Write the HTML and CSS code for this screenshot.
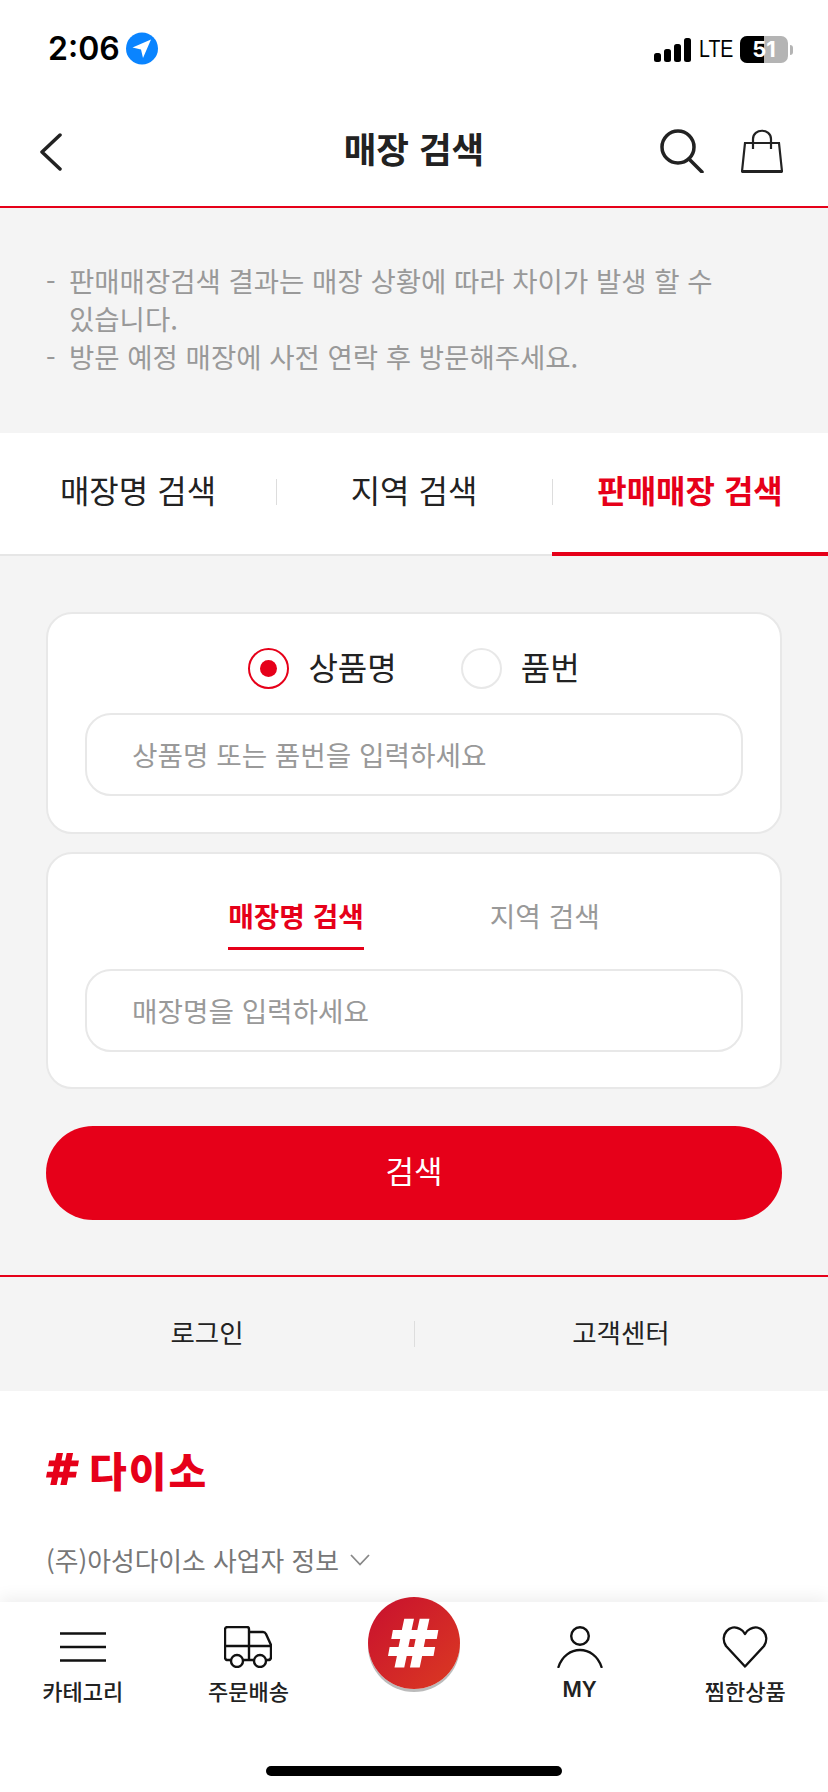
FILE: index.html
```html
<!DOCTYPE html>
<html lang="ko">
<head>
    <meta charset="UTF-8">
    <meta name="viewport" content="width=device-width, initial-scale=1.0">
    <title>매장 검색</title>
    <link rel="stylesheet" href="styles.css">
</head>
<body>
    <div class="page">
        <div class="status-bar">
            <div class="status-left">
                <span class="clock">2:06</span>
                <svg class="loc-icon" width="32" height="33" viewBox="0 0 32 33"><circle cx="16" cy="16.5" r="16" fill="#0a84ff"/><path d="M25 7.500 L6.500 15.500 L15 17.500 L17 26 Z" fill="#fff"/></svg>
            </div>
            <div class="status-right">
                <svg width="37" height="24" viewBox="0 0 37 24"><rect x="0" y="15" width="7" height="9" rx="2.500"/><rect x="10" y="11" width="7" height="13" rx="2.500"/><rect x="20" y="6" width="7" height="18" rx="2.500"/><rect x="30" y="0" width="7" height="24" rx="2.500"/></svg>
                <span class="lte">LTE</span>
                <div class="battery"><div class="battery-fill"></div><span class="battery-num">51</span></div>
                <div class="battery-cap"></div>
            </div>
        </div>

        <header class="top-bar">
            <svg class="back-icon" width="24" height="38" viewBox="0 0 24 38"><path d="M21 2 L3 19 L21 36" fill="none" stroke="#222" stroke-width="3.500" stroke-linecap="round" stroke-linejoin="round"/></svg>
            <h1 class="top-title">매장 검색</h1>
            <div class="top-icons">
                <svg width="46" height="44" viewBox="0 0 46 44"><circle cx="19" cy="18" r="16" fill="none" stroke="#222" stroke-width="3.500"/><path d="M30 30 L43 43" stroke="#222" stroke-width="3.500" stroke-linecap="round"/></svg>
                <svg width="42" height="44" viewBox="0 0 42 44"><path d="M4 14 H38 L41 42.500 H1 Z" fill="none" stroke="#222" stroke-width="2.200"/><path d="M12 20 V10 C12 -1 30 -1 30 10 V20" fill="none" stroke="#222" stroke-width="2.200"/><path d="M1 42.500 H41" stroke="#222" stroke-width="3"/></svg>
            </div>
        </header>

        <section class="notice">
            <ul class="notice-list">
                <li>판매매장검색 결과는 매장 상황에 따라 차이가 발생 할 수 있습니다.</li>
                <li>방문 예정 매장에 사전 연락 후 방문해주세요.</li>
            </ul>
        </section>

        <nav class="tabs">
            <a class="tab">매장명 검색</a>
            <a class="tab">지역 검색</a>
            <a class="tab tab-active">판매매장 검색</a>
        </nav>

        <main class="search-area">
            <div class="card card-product">
                <div class="radio-row">
                    <label class="radio-item"><span class="radio radio-on"></span>상품명</label>
                    <label class="radio-item"><span class="radio"></span>품번</label>
                </div>
                <div class="field">상품명 또는 품번을 입력하세요</div>
            </div>
            <div class="card card-store">
                <div class="sub-tabs">
                    <span class="sub-tab sub-tab-active">매장명 검색</span>
                    <span class="sub-tab">지역 검색</span>
                </div>
                <div class="field">매장명을 입력하세요</div>
            </div>
            <button class="search-btn">검색</button>
        </main>

        <div class="foot-links">
            <a class="foot-link">로그인</a>
            <a class="foot-link">고객센터</a>
        </div>

        <footer class="company">
            <div class="logo">
                <svg width="32" height="32" viewBox="0 0 32 32"><path d="M10 1 H16 L14.500 8 H18 L19.500 1 H25.500 L24 8 H31 L30 13.500 H23 L22 18.500 H29 L28 24 H21 L19.500 31 H13.500 L15 24 H11.500 L10 31 H4 L5.500 24 H0 L1 18.500 H6.500 L7.500 13.500 H2 L3 8 H8.500 Z M13.500 13.500 L12.500 18.500 H16 L17 13.500 Z" fill="#e60019" fill-rule="evenodd"/></svg>
                <span class="logo-text">다이소</span>
            </div>
            <div class="biz-info">
                <span>(주)아성다이소 사업자 정보</span>
                <svg width="20" height="12" viewBox="0 0 20 12"><path d="M1 1 L10 10.500 L19 1" fill="none" stroke="#888" stroke-width="1.800"/></svg>
            </div>
        </footer>

        <nav class="bottom-nav">
            <a class="nav-item">
                <svg width="46" height="42" viewBox="0 0 46 42"><path d="M0 7.500 H46 M0 21 H46 M0 34.500 H46" stroke="#111" stroke-width="2.400"/></svg>
                <span>카테고리</span>
            </a>
            <a class="nav-item">
                <svg width="48" height="42" viewBox="0 0 48 42"><path d="M8 34 H4 Q1 34 1 31 V4 Q1 1 4 1 H23 Q25 1 25 3 V34 H18 M1 20 H47 M25 6 H39 Q41 6 42 8 L47 19 V31 Q47 34 44 34 H41 M18 34 H31" fill="none" stroke="#111" stroke-width="2.400"/><circle cx="13" cy="35" r="6" fill="#fff" stroke="#111" stroke-width="2.400"/><circle cx="36" cy="35" r="6" fill="#fff" stroke="#111" stroke-width="2.400"/></svg>
                <span>주문배송</span>
            </a>
            <a class="nav-item nav-home"></a>
            <a class="nav-item">
                <svg width="46" height="42" viewBox="0 0 46 42"><circle cx="23" cy="10" r="8.800" fill="none" stroke="#111" stroke-width="2.400"/><path d="M1.500 41 C5 30 14 24 23 24 C32 24 41 30 44.500 41" fill="none" stroke="#111" stroke-width="2.400" stroke-linecap="round"/></svg>
                <span class="nav-my">MY</span>
            </a>
            <a class="nav-item">
                <svg width="46" height="42" viewBox="0 0 46 42"><path d="M23 40.500 L4 20 C-3 9 8 -3 18 3 C20 4 22 6 23 8 C24 6 26 4 28 3 C38 -3 49 9 42 20 Z" fill="none" stroke="#111" stroke-width="2.400" stroke-linejoin="round"/></svg>
                <span>찜한상품</span>
            </a>
            <div class="home-btn">
                <svg width="52" height="52" viewBox="0 0 32 32"><path d="M10 1 H16 L14.500 8 H18 L19.500 1 H25.500 L24 8 H31 L30 13.500 H23 L22 18.500 H29 L28 24 H21 L19.500 31 H13.500 L15 24 H11.500 L10 31 H4 L5.500 24 H0 L1 18.500 H6.500 L7.500 13.500 H2 L3 8 H8.500 Z M13.500 13.500 L12.500 18.500 H16 L17 13.500 Z" fill="#fff" fill-rule="evenodd"/></svg>
            </div>
            <div class="home-indicator"></div>
        </nav>
    </div>
</body>
</html>
```

FILE: styles.css
```css
* {
    box-sizing: border-box;
}

body {
    margin: 0;
    font-family: "Noto Sans CJK KR", "Noto Sans", sans-serif;
    color: #222;
    background-color: #fff;
}

.page {
    width: 828px;
    height: 1792px;
    position: relative;
    overflow: hidden;
    display: flex;
    flex-direction: column;
}

/* status bar */
.status-bar {
    height: 90px;
    padding: 32px 35px 0 48px;
    display: flex;
    justify-content: space-between;
    align-items: flex-start;
    flex-shrink: 0;
}

.status-left {
    display: flex;
    align-items: center;
    gap: 6px;
}

.clock {
    font-family: Inter, sans-serif;
    font-size: 32px;
    line-height: 33px;
    font-weight: 600;
    color: #000;
}

.status-right {
    display: flex;
    align-items: center;
    height: 33px;
    margin-top: 1px;
}

.lte {
    font-family: "Liberation Sans", sans-serif;
    font-size: 23px;
    color: #000;
    margin-left: 8px;
    transform: scaleX(0.85);
    transform-origin: left center;
    width: 34px;
}

.battery {
    width: 48px;
    height: 27px;
    margin-left: 7px;
    border-radius: 7px;
    background-color: #b4b4b4;
    position: relative;
    overflow: hidden;
}

.battery-fill {
    width: 24px;
    height: 100%;
    background-color: #000;
}

.battery-num {
    position: absolute;
    left: 0;
    right: 0;
    top: 0;
    text-align: center;
    font-family: Inter, sans-serif;
    font-size: 22px;
    line-height: 27px;
    font-weight: 700;
    color: #fff;
}

.battery-cap {
    width: 3px;
    height: 10px;
    margin-left: 2px;
    background-color: #b4b4b4;
    border-radius: 0 3px 3px 0;
}

/* top bar */
.top-bar {
    height: 118px;
    flex-shrink: 0;
    position: relative;
    display: flex;
    align-items: center;
    justify-content: center;
    border-bottom: 2px solid #e60019;
    padding-bottom: 2px;
}

.back-icon {
    position: absolute;
    left: 39px;
    top: 43px;
}

.top-title {
    margin: 0;
    font-size: 35.500px;
    font-weight: 700;
    color: #222;
}

.top-icons {
    position: absolute;
    right: 45px;
    top: 39px;
    display: flex;
    align-items: flex-start;
    gap: 36px;
}

/* notice */
.notice {
    height: 225px;
    flex-shrink: 0;
    background-color: #f4f4f4;
    padding: 53px 90px 0 46px;
}

.notice-list {
    margin: 0;
    padding: 0;
    list-style: none;
    font-size: 27.500px;
    line-height: 38px;
    color: #999;
}

.notice-list li {
    padding-left: 23px;
    position: relative;
}

.notice-list li::before {
    content: "-";
    position: absolute;
    left: 0;
}

/* tabs */
.tabs {
    height: 123px;
    flex-shrink: 0;
    display: flex;
    background-color: #fff;
    border-bottom: 2px solid #e6e6e6;
}

.tab {
    flex: 1;
    display: flex;
    align-items: center;
    justify-content: center;
    font-size: 32px;
    padding-bottom: 9px;
    color: #222;
    position: relative;
}

.tab + .tab::before {
    content: "";
    position: absolute;
    left: 0;
    top: 46px;
    height: 26px;
    border-left: 1px solid #ddd;
}

.tab-active {
    color: #e60019;
    font-weight: 700;
}

.tab-active::after {
    content: "";
    position: absolute;
    left: 0;
    right: 0;
    bottom: -2px;
    height: 4px;
    background-color: #e60019;
}

/* search */
.search-area {
    height: 721px;
    flex-shrink: 0;
    background-color: #f4f4f4;
    padding: 56px 46px 0;
    display: flex;
    flex-direction: column;
    border-bottom: 2px solid #e60019;
}

.card {
    background-color: #fff;
    border: 2px solid #e8e8e8;
    border-radius: 26px;
    padding: 0 37px;
}

.card-product {
    height: 222px;
    margin-bottom: 18px;
}

.card-store {
    height: 237px;
}

.radio-row {
    height: 99px;
    display: flex;
    justify-content: center;
    align-items: center;
    gap: 64px;
    padding-top: 4px;
}

.radio-item {
    display: flex;
    align-items: center;
    gap: 19px;
    font-size: 32px;
    color: #222;
}

.radio {
    width: 41px;
    height: 41px;
    margin-top: 5px;
    border: 2px solid #e8e8e8;
    border-radius: 50%;
    display: flex;
    align-items: center;
    justify-content: center;
}

.radio-on {
    border-color: #e60019;
}

.radio-on::after {
    content: "";
    width: 17px;
    height: 17px;
    border-radius: 50%;
    background-color: #e60019;
}

.field {
    height: 83px;
    border: 2px solid #e8e8e8;
    border-radius: 26px;
    padding-left: 45px;
    padding-bottom: 2px;
    display: flex;
    align-items: center;
    font-size: 27.700px;
    color: #999;
}

.sub-tabs {
    height: 97px;
    display: flex;
    justify-content: center;
    gap: 126px;
    padding-top: 22px;
    margin-bottom: 18px;
}

.sub-tab {
    height: 74px;
    font-size: 27.800px;
    line-height: 78px;
    color: #999;
}

.sub-tab-active {
    color: #e60019;
    font-weight: 700;
    border-bottom: 3px solid #e60019;
}

.search-btn {
    height: 94px;
    margin-top: 37px;
    padding: 0 0 8px;
    border: none;
    border-radius: 47px;
    background-color: #e60019;
    color: #fff;
    font-family: inherit;
    font-size: 31px;
}

/* footer links */
.foot-links {
    height: 114px;
    flex-shrink: 0;
    display: flex;
    background-color: #f4f4f4;
}

.foot-link {
    flex: 1;
    display: flex;
    align-items: center;
    justify-content: center;
    font-size: 26.500px;
    padding-bottom: 5px;
    color: #222;
    position: relative;
}

.foot-link + .foot-link::before {
    content: "";
    position: absolute;
    left: 0;
    top: 44px;
    height: 26px;
    border-left: 1px solid #ddd;
}

/* company */
.company {
    flex: 1;
    padding: 48px 46px 0;
    background-color: #fff;
}

.logo {
    display: flex;
    align-items: center;
    gap: 9px;
    height: 60px;
}

.logo svg {
    width: 34px;
    height: 34px;
}

.logo-text {
    font-size: 41px;
    font-weight: 900;
    color: #e60019;
    letter-spacing: 2px;
}

.biz-info {
    margin-top: 42px;
    display: flex;
    align-items: center;
    gap: 11px;
    font-size: 25.800px;
    color: #777;
}

/* bottom nav */
.bottom-nav {
    position: absolute;
    left: 0;
    right: 0;
    bottom: 0;
    height: 190px;
    padding-top: 24px;
    display: flex;
    background-color: #fff;
    box-shadow: 0 -4px 16px rgba(0, 0, 0, 0.07);
}

.nav-item {
    flex: 1;
    display: flex;
    flex-direction: column;
    align-items: center;
    gap: 6px;
    font-size: 22px;
    line-height: 32px;
    font-weight: 500;
    color: #222;
}

.nav-my {
    font-family: Inter, sans-serif;
    font-size: 21px;
    font-weight: 600;
}

.home-btn {
    position: absolute;
    left: 368px;
    top: -5px;
    width: 92px;
    height: 92px;
    border-radius: 50%;
    background: linear-gradient(135deg, #c8102e, #db3a22);
    box-shadow: 0 3px 0 #bbb;
    display: flex;
    align-items: center;
    justify-content: center;
}

.home-indicator {
    position: absolute;
    left: 266px;
    bottom: 16px;
    width: 296px;
    height: 10px;
    border-radius: 5px;
    background-color: #000;
}
```
